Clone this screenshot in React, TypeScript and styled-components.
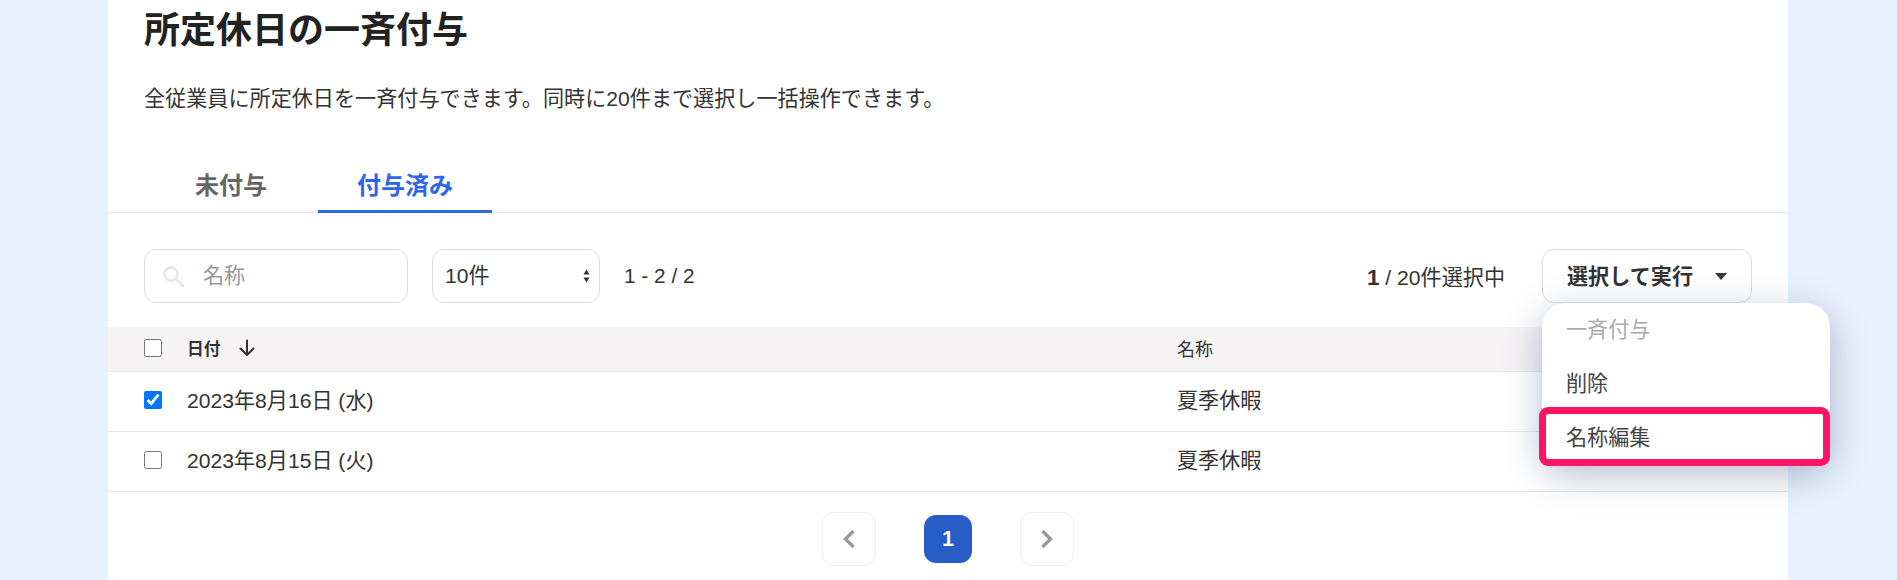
import React from "react";
import styled, { createGlobalStyle } from "styled-components";

const FONT = `"Liberation Sans", "Noto Sans CJK JP", sans-serif`;

const Global = createGlobalStyle`
  html, body { margin: 0; padding: 0; height: 580px; overflow: hidden; background: #e9f1fd; }
  body { font-family: ${FONT}; color: #333; }
  * { box-sizing: border-box; }
`;

const Page = styled.div`
  height: 580px;
  padding-left: 108px;
  overflow: hidden;
`;
const Panel = styled.main`
  width: 1680px;
  height: 580px;
  background: #fff;
`;
const Head = styled.header`
  padding: 4px 36px 0;
`;
const Title = styled.h1`
  margin: 0;
  font-size: 36px;
  line-height: 54px;
  font-weight: 700;
  color: #222;
`;
const Lead = styled.p`
  margin: 26px 0 0;
  font-size: 21.12px;
  line-height: 30px;
  color: #333;
`;
const Tabs = styled.nav`
  display: flex;
  gap: 12px;
  margin-top: 56px;
  padding-left: 48px;
  border-bottom: 1px solid #e6e6e6;
`;
const Tab = styled.div<{ $active?: boolean }>`
  padding: 0 39px 8px;
  font-size: 24px;
  line-height: 32px;
  font-weight: 700;
  color: ${(p) => (p.$active ? "#2b66ee" : "#666")};
  margin-bottom: -1px;
  border-bottom: 3px solid ${(p) => (p.$active ? "#2b66ee" : "transparent")};
`;
const Toolbar = styled.section`
  display: flex;
  align-items: center;
  height: 54px;
  margin: 36px 36px 0;
`;
const SearchBox = styled.label`
  display: flex;
  align-items: center;
  width: 264px;
  height: 54px;
  border: 1px solid #ddd;
  border-radius: 12px;
  padding-left: 17px;
  gap: 19px;
`;
const SearchInput = styled.input`
  border: 0;
  outline: 0;
  width: 190px;
  padding: 0;
  font: 21.12px ${FONT};
  color: #333;
  &::placeholder { color: #999; opacity: 1; }
`;
const SelectWrap = styled.div`
  position: relative;
  width: 168px;
  height: 54px;
  margin-left: 24px;
`;
const SelectBox = styled.select`
  appearance: none;
  width: 100%;
  height: 100%;
  border: 1px solid #ddd;
  border-radius: 12px;
  padding: 0 12px 2px;
  background: #fff;
  font: 21.12px ${FONT};
  color: #333;
`;
const SelectArrows = styled.svg`
  position: absolute;
  right: 10px;
  top: 20px;
  pointer-events: none;
`;
const Range = styled.span`
  margin-left: 24px;
  font-size: 20.8px;
  color: #333;
`;
const Count = styled.span`
  margin-left: auto;
  font-size: 21.12px;
  color: #333;
`;
const CountNum = styled.b`
  font-size: 22.5px;
`;
const ActionWrap = styled.div`
  position: relative;
  margin-left: 37px;
`;
const ActionButton = styled.button`
  display: flex;
  align-items: center;
  width: 210px;
  height: 54px;
  padding: 0 24px 3px 24px;
  justify-content: space-between;
  border: 1px solid #ddd;
  border-radius: 12px;
  background: #fff;
  font: 700 21.12px ${FONT};
  color: #333;
`;
const Caret = styled.i`
  width: 0;
  height: 0;
  margin-top: 3px;
  border-left: 6px solid transparent;
  border-right: 6px solid transparent;
  border-top: 7px solid #3a3a3a;
`;
const Menu = styled.ul`
  position: absolute;
  z-index: 2;
  top: 54px;
  left: 0;
  width: 288px;
  margin: 0;
  padding: 0;
  list-style: none;
  background: #fff;
  border-radius: 24px;
  box-shadow: 0 10px 36px rgba(50, 70, 120, 0.36);
`;
const MenuItem = styled.li<{ $disabled?: boolean }>`
  position: relative;
  height: 54px;
  padding: 0 24px 5px;
  display: flex;
  align-items: center;
  font-size: 21.12px;
  color: ${(p) => (p.$disabled ? "#aaa" : "#444")};
`;
const Highlight = styled.span`
  position: absolute;
  left: -3px;
  right: 0;
  top: -4px;
  bottom: -1px;
  border: 7px solid #ff1464;
  border-radius: 9px;
`;
const Table = styled.section`
  margin-top: 24px;
`;
const gridRow = `
  display: grid;
  grid-template-columns: 36px 997px 1fr;
  align-items: center;
  padding-left: 36px;
  border-bottom: 1px solid #e6e6e6;
`;
const HeaderRow = styled.div`
  ${gridRow}
  height: 45px;
  background: #f5f3f4;
`;
const Row = styled.div`
  ${gridRow}
  height: 60px;
`;
const Check = styled.input`
  width: 18px;
  height: 18px;
  margin: 0 0 3px;
`;
const SortHead = styled.div`
  display: flex;
  align-items: center;
  gap: 17px;
  padding: 0 0 3px 7px;
  font-size: 16.8px;
  font-weight: 700;
  color: #333;
`;
const NameHead = styled.div`
  padding-bottom: 3px;
  font-size: 18px;
  color: #333;
`;
const Cell = styled.div<{ $first?: boolean }>`
  padding: 0 0 5px ${(p) => (p.$first ? "7px" : "0")};
  font-size: 21.12px;
  color: #333;
`;
const Pager = styled.nav`
  display: flex;
  justify-content: center;
  align-items: center;
  gap: 48px;
  margin-top: 20px;
`;
const PageArrow = styled.button`
  display: flex;
  align-items: center;
  justify-content: center;
  width: 54px;
  height: 54px;
  padding: 0;
  background: #fff;
  border: 1px solid #eee;
  border-radius: 12px;
  color: #999;
`;
const PageCurrent = styled.span`
  display: flex;
  align-items: center;
  justify-content: center;
  width: 48px;
  height: 48px;
  background: #285cc6;
  color: #fff;
  border-radius: 12px;
  font-size: 21.6px;
  font-weight: 700;
`;

const SearchIcon = () => (
  <svg width="22" height="22" viewBox="0 0 22 22" fill="none" stroke="#e8e8e8" strokeWidth="2.6">
    <circle cx="9" cy="9" r="6.6" />
    <path d="M14 14l7 7" strokeLinecap="round" />
  </svg>
);
const ArrowDown = () => (
  <svg width="18" height="18" viewBox="0 0 18 18" fill="none" stroke="#333" strokeWidth="2" strokeLinecap="round" strokeLinejoin="round">
    <path d="M9 1.5v14.5M2.5 9.5L9 16l6.5-6.5" />
  </svg>
);
const Chevron = ({ dir }: { dir: "l" | "r" }) => (
  <svg width="14" height="20" viewBox="0 0 14 20" fill="none" stroke="#999" strokeWidth="3.4">
    <path d={dir === "l" ? "M11.5 2L3.5 10l8 8" : "M2.5 2l8 8-8 8"} />
  </svg>
);

export default function App() {
  return (
    <Page>
      <Global />
      <Panel>
        <Head>
          <Title>所定休日の一斉付与</Title>
          <Lead>全従業員に所定休日を一斉付与できます。同時に20件まで選択し一括操作できます。</Lead>
        </Head>
        <Tabs>
          <Tab>未付与</Tab>
          <Tab $active>付与済み</Tab>
        </Tabs>
        <Toolbar>
          <SearchBox>
            <SearchIcon />
            <SearchInput placeholder="名称" />
          </SearchBox>
          <SelectWrap>
            <SelectBox defaultValue="10">
              <option value="10">10件</option>
              <option value="20">20件</option>
            </SelectBox>
            <SelectArrows width="7" height="14" viewBox="0 0 7 14" fill="#333">
              <path d="M3.5 0.5L6.5 5.5H0.5zM3.5 13.5L0.5 8.5H6.5z" />
            </SelectArrows>
          </SelectWrap>
          <Range>1 - 2 / 2</Range>
          <Count>
            <CountNum>1</CountNum> / 20件選択中
          </Count>
          <ActionWrap>
            <ActionButton>
              選択して実行
              <Caret />
            </ActionButton>
            <Menu>
              <MenuItem $disabled>一斉付与</MenuItem>
              <MenuItem>削除</MenuItem>
              <MenuItem>
                名称編集
                <Highlight />
              </MenuItem>
            </Menu>
          </ActionWrap>
        </Toolbar>
        <Table>
          <HeaderRow>
            <Check type="checkbox" />
            <SortHead>
              日付
              <ArrowDown />
            </SortHead>
            <NameHead>名称</NameHead>
          </HeaderRow>
          <Row>
            <Check type="checkbox" defaultChecked />
            <Cell $first>2023年8月16日 (水)</Cell>
            <Cell>夏季休暇</Cell>
          </Row>
          <Row>
            <Check type="checkbox" />
            <Cell $first>2023年8月15日 (火)</Cell>
            <Cell>夏季休暇</Cell>
          </Row>
        </Table>
        <Pager>
          <PageArrow aria-label="前へ">
            <Chevron dir="l" />
          </PageArrow>
          <PageCurrent>1</PageCurrent>
          <PageArrow aria-label="次へ">
            <Chevron dir="r" />
          </PageArrow>
        </Pager>
      </Panel>
    </Page>
  );
}
